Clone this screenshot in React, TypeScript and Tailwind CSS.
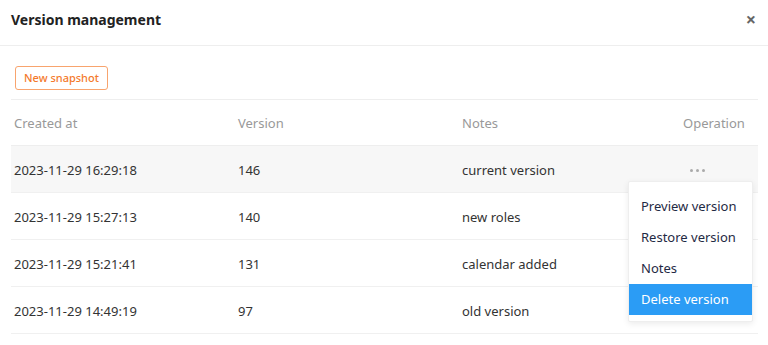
import React from 'react';

const rows = [
  { created: '2023-11-29 16:29:18', version: '146', notes: 'current version' },
  { created: '2023-11-29 15:27:13', version: '140', notes: 'new roles' },
  { created: '2023-11-29 15:21:41', version: '131', notes: 'calendar added' },
  { created: '2023-11-29 14:49:19', version: '97', notes: 'old version' },
];

const menuItems = ['Preview version', 'Restore version', 'Notes', 'Delete version'];

const App = () => {
  return (
    <div className="relative w-[768px] h-[345px] overflow-hidden bg-white font-['Noto_Sans',sans-serif] text-[13px] text-[#333]">
      {/* Header */}
      <div className="flex items-center justify-between h-[46px] pl-[11px] pr-[12px] pb-[7px] border-b border-[#eeeeee]">
        <h1 className="text-[14px] font-bold text-[#222]">Version management</h1>
        <button className="text-[#666] text-[18px] leading-none font-bold">×</button>
      </div>

      {/* Toolbar */}
      <div className="pl-[15px] pt-[20px] pb-[9px]">
        <button className="h-[24px] w-[93px] border border-[#f8a46e] rounded-[3px] text-[#f47a2c] text-[11px] font-medium">
          New snapshot
        </button>
      </div>

      {/* Table */}
      <div className="ml-[11px] w-[747px] border-t border-[#eeeeee]">
        <div className="grid grid-cols-[224px_224px_224px_1fr] h-[46px] pt-[2px] items-center text-[#999] border-b border-[#eeeeee]">
          <div className="pl-[3px]">Created at</div>
          <div className="pl-[3px]">Version</div>
          <div className="pl-[3px]">Notes</div>
          <div className="text-right pr-[16px]">Operation</div>
        </div>
        {rows.map((r, i) => (
          <div
            key={r.version}
            className={`grid grid-cols-[224px_224px_224px_1fr] h-[47px] pt-[3px] items-center border-b border-[#f0f0f0] ${
              i === 0 ? 'bg-[#f7f7f7]' : ''
            }`}
          >
            <div className="pl-[3px]">{r.created}</div>
            <div className="pl-[3px]">{r.version}</div>
            <div className="pl-[3px]">{r.notes}</div>
            <div className="pl-[7px]">
              {i === 0 && (
                <span className="flex gap-[3px]">
                  <span className="w-[3px] h-[3px] rounded-full bg-[#aaa]" />
                  <span className="w-[3px] h-[3px] rounded-full bg-[#aaa]" />
                  <span className="w-[3px] h-[3px] rounded-full bg-[#aaa]" />
                </span>
              )}
            </div>
          </div>
        ))}
      </div>

      {/* Dropdown menu */}
      <div className="absolute left-[628px] top-[181px] w-[125px] h-[141px] bg-white border border-[#eeeeee] rounded-[2px] shadow-[0_2px_6px_rgba(0,0,0,0.08)] pt-[9px]">
        {menuItems.map((item) => (
          <div
            key={item}
            className={`h-[31px] flex items-center pl-[12px] ${
              item === 'Delete version' ? 'bg-[#2b9cf5] text-white' : 'text-[#1f2a44]'
            }`}
          >
            {item}
          </div>
        ))}
      </div>
    </div>
  );
};

export default App;
